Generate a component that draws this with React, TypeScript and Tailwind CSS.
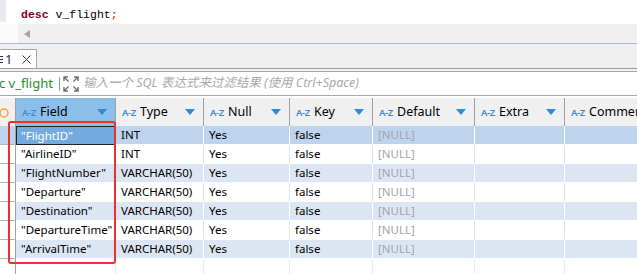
import React from "react";

type Col = { key: string; w: string };

const cols: Col[] = [
  { key: "Field", w: "w-[100px]" },
  { key: "Type", w: "w-[88px]" },
  { key: "Null", w: "w-[86px]" },
  { key: "Key", w: "w-[83px]" },
  { key: "Default", w: "w-[102px]" },
  { key: "Extra", w: "w-[90px]" },
  { key: "Comment", w: "flex-1" },
];

const fields = [
  ["\"FlightID\"", "INT"],
  ["\"AirlineID\"", "INT"],
  ["\"FlightNumber\"", "VARCHAR(50)"],
  ["\"Departure\"", "VARCHAR(50)"],
  ["\"Destination\"", "VARCHAR(50)"],
  ["\"DepartureTime\"", "VARCHAR(50)"],
  ["\"ArrivalTime\"", "VARCHAR(50)"],
];

function SortTriangle() {
  return (
    <svg width="10" height="6" viewBox="0 0 10 6" className="shrink-0">
      <path d="M0 0 L10 0 L5 6 Z" fill="#2b8dd6" />
    </svg>
  );
}

function ExpandIcon() {
  return (
    <svg width="16" height="16" viewBox="0 0 16 16" fill="none" stroke="#6f6f6f" strokeWidth="1.4">
      <path d="M1 5 V1 H5 M1 1 L5.5 5.5" />
      <path d="M11 1 H15 V5 M15 1 L10.5 5.5" />
      <path d="M1 11 V15 H5 M1 15 L5.5 10.5" />
      <path d="M15 11 V15 H11 M15 15 L10.5 10.5" />
    </svg>
  );
}

export default function App() {
  return (
    <div className="relative w-[637px] h-[274px] overflow-hidden bg-white font-['Noto_Sans',sans-serif] text-[11.5px] text-black">
      {/* editor line */}
      <div className="flex h-[24px]">
        <div className="w-[6px] h-[22px] bg-[#e8e8f3]" />
        <div className="pl-[15px] pt-[7px] font-['Liberation_Mono',monospace] text-[11.5px] leading-[16px] whitespace-pre">
          <span className="font-bold text-[#7d0028]">desc</span>
          <span> v_flight</span>
          <span className="text-[#e00000]">;</span>
        </div>
      </div>

      {/* horizontal scroll */}
      <div className="flex h-[19px]">
        <div className="w-[18px] bg-[#fbfbfb]" />
        <div className="flex-1 bg-[#f0f0f0] flex items-center pl-[6px]">
          <svg width="6" height="8" viewBox="0 0 6 8">
            <path d="M6 0 L0 4 L6 8 Z" fill="#a3a3a3" />
          </svg>
        </div>
      </div>
      <div className="h-px bg-[#9fbbe0]" />

      {/* tab bar */}
      <div className="flex items-end h-[25px] bg-[#f0f0f0] border-b border-[#a0a0a0]">
        <div className="flex items-center h-[19px] w-[37px] bg-white border-t border-r border-[#a8a8a8]">
          <div className="w-[3px] flex flex-col gap-[2px] mr-[2px]">
            <div className="h-px bg-[#2a3a7a]" />
            <div className="h-px bg-[#2a3a7a]" />
            <div className="h-px bg-[#2a3a7a]" />
          </div>
          <span className="text-[13px] text-[#1c2a6e] leading-none">1</span>
          <svg width="9" height="9" viewBox="0 0 9 9" className="ml-[10px]">
            <path d="M0.5 0.5 L8.5 8.5 M8.5 0.5 L0.5 8.5" stroke="#333" strokeWidth="1" />
          </svg>
        </div>
      </div>
      <div className="h-[2px] bg-[#f0f0f0]" />

      {/* filter bar */}
      <div className="flex items-center h-[25px] border-y border-[#a8a8a8] bg-white">
        <span className="-ml-[1px] text-[13px] text-[#23912b]">c v_flight</span>
        <div className="ml-[6px] w-px h-[14px] bg-[#9a9a9a]" />
        <div className="ml-[3px]">
          <ExpandIcon />
        </div>
        <span className="ml-[4px] italic text-[12.5px] text-[#a9a9a9] whitespace-nowrap font-['Noto_Sans','Noto_Sans_CJK_SC',sans-serif]">
          输入一个 SQL 表达式来过滤结果 (使用 Ctrl+Space)
        </span>
      </div>
      <div className="h-[2px] bg-white" />

      {/* header */}
      <div className="flex h-[28px]">
        <div className="w-[16px] bg-[#f0f0f0] border-r border-[#a0a0a0] flex items-center">
          <svg width="10" height="10" viewBox="0 0 10 10" className="-ml-[1px] mt-[1px]">
            <circle cx="5" cy="5" r="4" fill="none" stroke="#f2a43a" strokeWidth="1.5" />
          </svg>
        </div>
        {cols.map((c, i) => (
          <div
            key={c.key}
            className={`${c.w} flex items-center ${i === 0 ? "bg-[#8bbfea]" : "bg-[#f0f0f0]"} ${i < cols.length - 1 ? "border-r border-[#a0a0a0]" : ""} pl-[6px] pr-[8px] overflow-hidden`}
          >
            <span className="text-[9.5px] font-semibold text-[#3a8ad6] tracking-[-0.3px] mt-[3px] shrink-0">A-Z</span>
            <span className="ml-[4px] text-[12.5px] whitespace-nowrap">{c.key}</span>
            {i < cols.length - 1 && (
              <>
                <div className="flex-1" />
                <SortTriangle />
              </>
            )}
          </div>
        ))}
      </div>

      {/* rows */}
      {fields.map(([name, type], r) => {
        const selected = r === 0;
        const bg = selected ? "bg-[#bdd4ec]" : r % 2 === 0 ? "bg-[#dce6f2]" : "bg-white";
        const sep = r % 2 === 0 ? "border-r-white" : "border-r-[#e4e4e4]";
        const cell = `flex items-center pl-[5px] whitespace-nowrap border-r border-b border-b-white ${sep} ${bg}`;
        return (
          <div key={name} className="flex h-[19px]">
            <div className={`w-[16px] border-r border-r-[#a0a0a0] border-b border-b-[#b4b4b4] ${selected ? "bg-[#bdd4ec]" : "bg-white"}`} />
            {selected ? (
              <div className="w-[100px] flex items-center pl-[4px] whitespace-nowrap bg-[#74aadf] text-white border border-[#222]">
                {name}
              </div>
            ) : (
              <div className={`w-[100px] ${cell}`}>{name}</div>
            )}
            <div className={`w-[88px] ${cell}`}>{type}</div>
            <div className={`w-[86px] ${cell}`}>Yes</div>
            <div className={`w-[83px] ${cell}`}>false</div>
            <div className={`w-[102px] ${cell} text-[#a6a2ad]`}>[NULL]</div>
            <div className={`w-[90px] ${cell}`} />
            <div className={`flex-1 border-b border-b-white ${bg}`} />
          </div>
        );
      })}

      {/* empty area */}
      <div className="flex h-[20px]">
        <div className="w-[16px] border-r border-[#a0a0a0]" />
        <div className="w-[100px] border-r border-[#ececec]" />
        <div className="w-[88px] border-r border-[#ececec]" />
        <div className="w-[86px] border-r border-[#ececec]" />
        <div className="w-[83px] border-r border-[#ececec]" />
        <div className="w-[102px] border-r border-[#ececec]" />
        <div className="w-[90px] border-r border-[#ececec]" />
        <div className="flex-1" />
      </div>

      {/* red annotation box */}
      <div className="absolute left-[8px] top-[121px] w-[108px] h-[143px] border-[2.5px] border-[#e8322e] rounded-[3px] pointer-events-none" />
    </div>
  );
}
